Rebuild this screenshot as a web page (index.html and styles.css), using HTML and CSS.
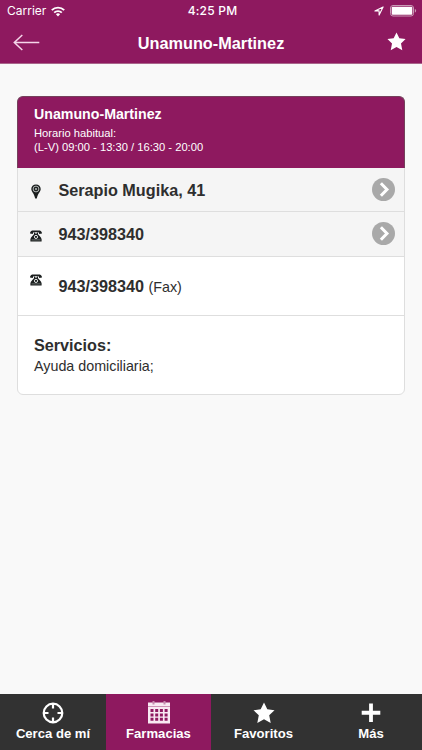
FILE: index.html
```html
<!DOCTYPE html>
<html lang="es">
<head>
<meta charset="utf-8">
<title>Unamuno-Martinez</title>
<link rel="stylesheet" href="styles.css">
</head>
<body>
<svg class="defs" width="0" height="0" aria-hidden="true">
  <symbol id="star" viewBox="0 0 22 22"><path d="M11 .5l3.300 6.800 7.200.9-5.300 5 1.500 7.800-6.700-3.700L4.300 21l1.500-7.800-5.300-5 7.200-.9z"/></symbol>
  <symbol id="phone" viewBox="0 0 12 12"><path fill="#1b1f1f" d="M2.200 0.400h7.600C11.300.8 12 2 12 3.500L9.300 4 8.600 2.300H3.400L2.700 4 0 3.500C0 2 .7.8 2.200.4z"/><path fill="#1b1f1f" d="M4 2.500h1v1h2v-1h1v1.700c1 1.300 3.300 3 3.600 5v2.200H.4V9.200c.3-2 2.600-3.700 3.600-5z"/><circle cx="6" cy="6.900" r="1.600" fill="none" stroke="#e4e7e6" stroke-width="1"/><path stroke="#8b9290" stroke-width=".7" d="M1.500 9.900h9"/></symbol>
  <symbol id="chevron" viewBox="0 0 22 22"><circle cx="11" cy="11" r="11" fill="#a9a9a9"/><path d="M8.500 5l5.800 6-5.800 6" fill="none" stroke="#fff" stroke-width="2.900"/></symbol>
</svg>
<div class="screen">
  <header class="top">
    <div class="status">
      <div class="carrier"><span>Carrier</span>
        <svg width="14" height="11" viewBox="0 0 14 11"><g fill="none" stroke="#fff" stroke-width="1.900"><path d="M.8 4.200a8.800 8.800 0 0 1 12.400 0"/><path d="M3.200 6.700a5.400 5.400 0 0 1 7.600 0"/></g><path fill="#fff" d="M4.900 8.300a3 3 0 0 1 4.200 0L7 10.500z"/></svg>
      </div>
      <div class="time">4:25 PM</div>
      <div class="indicators">
        <svg width="10" height="10" viewBox="0 0 10 10"><path d="M.9 4.900L9.100.9 5.100 9.100V4.900z" fill="none" stroke="#fff" stroke-width="1.100" stroke-linejoin="round"/></svg>
        <svg width="27" height="12" viewBox="0 0 27 12"><rect x=".5" y=".5" width="23" height="10.500" rx="2.500" fill="none" stroke="#c99bb5"/><rect x="1.700" y="1.700" width="20.600" height="8.100" rx="1" fill="#fff"/><path d="M24.800 4v3.500c1-.3 1.300-1 1.300-1.750S25.800 4.300 24.800 4z" fill="#c99bb5"/></svg>
      </div>
    </div>
    <div class="nav">
      <svg class="back" width="27" height="17" viewBox="0 0 27 17"><path d="M9.300 1L1.300 8.500l8 7.500M1.500 8.500h24.800" fill="none" stroke="#f5d5e9" stroke-width="1.500"/></svg>
      <h1>Unamuno-Martinez</h1>
      <svg class="fav" width="19" height="19"><use href="#star"/></svg>
    </div>
  </header>
  <main>
    <section class="card">
      <div class="card-head">
        <h2>Unamuno-Martinez</h2>
        <p>Horario habitual:<br>(L-V) 09:00 - 13:30 / 16:30 - 20:00</p>
      </div>
      <div class="row link">
        <svg class="icon low" width="12" height="15" viewBox="0 0 12 15"><path fill="#1b1f1f" d="M6 .4c2.800 0 4.700 2 4.700 4.500C10.700 7.500 7.500 9.600 6.800 14.500H5.200C4.500 9.600 1.300 7.500 1.300 4.900 1.300 2.400 3.200.4 6 .4z"/><circle cx="6" cy="5" r="2.900" fill="none" stroke="#d8dddb" stroke-width=".8"/><circle cx="6" cy="5" r="1.100" fill="#aeb5b2"/></svg>
        <strong>Serapio Mugika, 41</strong>
        <svg class="go" width="23" height="23"><use href="#chevron"/></svg>
      </div>
      <div class="row link phone">
        <svg class="icon low" width="12" height="12"><use href="#phone"/></svg>
        <strong>943/398340</strong>
        <svg class="go" width="23" height="23"><use href="#chevron"/></svg>
      </div>
      <div class="row fax">
        <svg class="icon" width="12" height="12"><use href="#phone"/></svg>
        <div><strong>943/398340</strong> <span>(Fax)</span></div>
      </div>
      <div class="services">
        <h3>Servicios:</h3>
        <p>Ayuda domiciliaria;</p>
      </div>
    </section>
  </main>
  <nav class="tabs">
    <div class="tab">
      <svg width="22" height="22" viewBox="0 0 22 22"><g fill="none" stroke="#fff" stroke-width="2.200"><circle cx="11" cy="11" r="9.300"/><path d="M11 1v5.500M11 15.500V21M1 11h5.500M15.500 11H21"/></g></svg>
      <span>Cerca de mí</span>
    </div>
    <div class="tab active">
      <svg width="22" height="23" viewBox="0 0 22 23"><path fill="#f8e9f2" fill-rule="evenodd" d="M0 1.500h22V22.500H0zM2.500 8v3h3V8zm4.700 0v3h3V8zm4.700 0v3h3V8zm4.700 0v3h3V8zM2.500 12.400v3h3v-3zm4.700 0v3h3v-3zm4.700 0v3h3v-3zm4.700 0v3h3v-3zM2.500 16.800v3h3v-3zm4.700 0v3h3v-3zm4.700 0v3h3v-3zm4.700 0v3h3v-3z"/><path stroke="#c27ca5" stroke-width=".8" d="M0 5.500h22"/><path stroke="#c58aae" stroke-width="2" d="M5.500 0v3.500M16.500 0v3.500"/></svg>
      <span>Farmacias</span>
    </div>
    <div class="tab">
      <svg width="22" height="22"><use href="#star"/></svg>
      <span>Favoritos</span>
    </div>
    <div class="tab more">
      <svg width="22" height="22" viewBox="0 0 22 22"><path d="M11 1.500v18.500M1.700 10.750h18.600" stroke="#fff" stroke-width="3.800"/></svg>
      <span>Más</span>
    </div>
  </nav>
</div>
</body>
</html>
```

FILE: styles.css
```css
* { box-sizing: border-box; }
body {
  margin: 0;
  background: #f9f9f9;
  color: #2e2e2e;
  font-family: "Liberation Sans", Arial, sans-serif;
}
h1, h2, h3, p { margin: 0; }
svg { display: block; flex: none; }
.defs { position: absolute; }
.screen {
  display: flex;
  flex-direction: column;
  height: 750px;
}
.top {
  height: 64px;
  background: #8e195f;
  color: #fff;
  border-bottom: 1px solid #a9658b;
}
.status {
  display: grid;
  grid-template-columns: 1fr auto 1fr;
  align-items: center;
  height: 22px;
  padding: 0 5px 0 7px;
  font: 12px/22px Inter, sans-serif;
}
.carrier { display: flex; align-items: center; gap: 5px; }
.time { font-weight: 500; letter-spacing: .2px; margin-left: 1px; }
.indicators {
  display: flex;
  align-items: center;
  justify-content: flex-end;
  gap: 6px;
}
.nav {
  display: grid;
  grid-template-columns: 1fr auto 1fr;
  align-items: center;
  height: 41px;
  padding: 0 16px 0 13px;
}
.nav h1 { font-size: 16.3px; line-height: 20px; padding-top: 1px; margin-left: 3px; }
.back { margin-top: -1px; }
.fav { justify-self: end; fill: #fff; margin-top: -3px; }
main { flex: 1; padding: 32px 17px 0; }
.card {
  height: 299px;
  border: 1px solid #dedede;
  border-radius: 6px;
  background: #fff;
}
.card-head {
  height: 72px;
  margin: -1px -1px 0;
  padding: 9px 16px;
  border: 1px solid #73425b;
  border-bottom: 0;
  border-radius: 6px 6px 0 0;
  background: #8e195f;
  color: #fff;
}
.card-head h2 { font-size: 14.2px; line-height: 17px; }
.card-head p { font-size: 11.2px; line-height: 14px; margin-top: 3px; }
.row {
  display: flex;
  align-items: center;
  height: 44px;
  padding: 0 9px 0 12px;
  border-bottom: 1px solid #dedede;
}
.link { background: #f5f5f5; }
.phone { height: 45px; }
.row strong { font-size: 16.2px; line-height: 20px; }
.icon { margin-right: 16.5px; }
.icon.low { margin-top: 3px; }
.go { margin-left: auto; }
.phone .go { margin-top: -1px; }
.fax { height: 59px; }
.fax .icon { margin-top: -12px; }
.fax span { font-size: 14.3px; }
.services { padding: 19px 16px; }
.services h3 { font-size: 16.2px; line-height: 20px; }
.services p { font-size: 14.3px; line-height: 20px; margin-top: 1px; }
.tabs {
  display: grid;
  grid-template-columns: 106px 105px 105px 106px;
  height: 56px;
  background: #323232;
  color: #fff;
}
.tab {
  display: flex;
  flex-direction: column;
  align-items: center;
  padding-top: 8px;
  font-size: 13.1px;
  font-weight: 700;
}
.tab svg { fill: #fff; }
.tab span { line-height: 16px; margin-top: 2px; }
.tab.active { background: #8e195f; padding-top: 7px; }
.more { padding-left: 4px; }
```
